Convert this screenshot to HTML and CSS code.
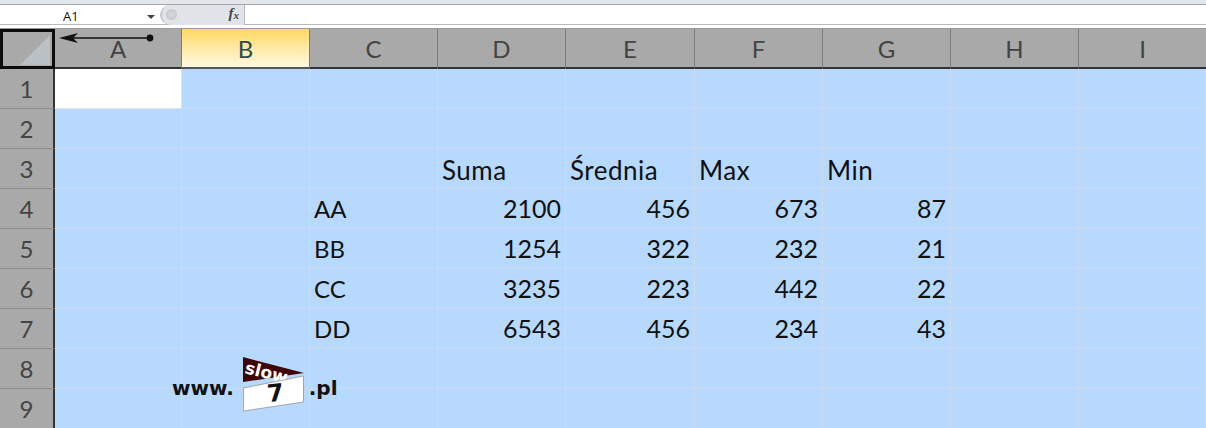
FILE: index.html
```html
<!DOCTYPE html>
<html lang="pl">
<head>
<meta charset="utf-8">
<title>Arkusz</title>
<link rel="stylesheet" href="styles.css">
</head>
<body>
<div class="app">
  <div class="formula-bar">
    <div class="name-box"><span class="name-text">A1</span><svg class="caret" width="8" height="4" viewBox="0 0 8 4"><path d="M0 0h8L4 4z" fill="#444"/></svg></div>
    <div class="fx-box"><span class="knob"></span><span class="fx">f<sub>x</sub></span></div>
    <div class="formula-input"></div>
  </div>
  <div class="sheet">
    <div class="corner"><svg width="30" height="30" viewBox="0 0 30 30"><path d="M30 0V30H0z" fill="#b9c0c6"/></svg></div>
    <div class="col">A</div><div class="col active">B</div><div class="col">C</div><div class="col">D</div><div class="col">E</div><div class="col">F</div><div class="col">G</div><div class="col">H</div><div class="col last">I</div>

    <div class="row-h">1</div><div class="c sel"></div><div class="c"></div><div class="c"></div><div class="c"></div><div class="c"></div><div class="c"></div><div class="c"></div><div class="c"></div><div class="c"></div>
    <div class="row-h">2</div><div class="c"></div><div class="c"></div><div class="c"></div><div class="c"></div><div class="c"></div><div class="c"></div><div class="c"></div><div class="c"></div><div class="c"></div>
    <div class="row-h">3</div><div class="c"></div><div class="c"></div><div class="c"></div><div class="c t">Suma</div><div class="c t">Średnia</div><div class="c t">Max</div><div class="c t">Min</div><div class="c"></div><div class="c"></div>
    <div class="row-h">4</div><div class="c"></div><div class="c"></div><div class="c">AA</div><div class="c n">2100</div><div class="c n">456</div><div class="c n">673</div><div class="c n">87</div><div class="c"></div><div class="c"></div>
    <div class="row-h">5</div><div class="c"></div><div class="c"></div><div class="c">BB</div><div class="c n">1254</div><div class="c n">322</div><div class="c n">232</div><div class="c n">21</div><div class="c"></div><div class="c"></div>
    <div class="row-h">6</div><div class="c"></div><div class="c"></div><div class="c">CC</div><div class="c n">3235</div><div class="c n">223</div><div class="c n">442</div><div class="c n">22</div><div class="c"></div><div class="c"></div>
    <div class="row-h">7</div><div class="c"></div><div class="c"></div><div class="c">DD</div><div class="c n">6543</div><div class="c n">456</div><div class="c n">234</div><div class="c n">43</div><div class="c"></div><div class="c"></div>
    <div class="row-h">8</div><div class="c"></div><div class="c"></div><div class="c"></div><div class="c"></div><div class="c"></div><div class="c"></div><div class="c"></div><div class="c"></div><div class="c"></div>
    <div class="row-h">9</div><div class="c"></div><div class="c"></div><div class="c"></div><div class="c"></div><div class="c"></div><div class="c"></div><div class="c"></div><div class="c"></div><div class="c"></div>

    <svg class="arrow" width="96" height="12" viewBox="0 0 96 12"><path d="M10 6H92" stroke="#111" stroke-width="1.6"/><path d="M0 6L19 1 14 6 19 11z" fill="#111"/><circle cx="91" cy="6" r="3.4" fill="#111"/></svg>

    <div class="logo">
      <span class="www">www.</span>
      <svg class="mark" width="62" height="55" viewBox="0 0 62 55">
        <path d="M0 0L61 16 0 25z" fill="#3d0505"/>
        <text class="slow" transform="translate(1 16) rotate(14)">slow</text>
        <path d="M0.5 31L60.5 19V45L0.5 54z" fill="#fff" stroke="#8a8a8a" stroke-width=".7"/>
        <text class="seven" transform="translate(25 45) rotate(-6)">7</text>
      </svg>
      <span class="www pl">.pl</span>
    </div>
  </div>
</div>
</body>
</html>
```
FILE: styles.css
```css
* { box-sizing: border-box; }
html, body { margin: 0; padding: 0; width: 1206px; height: 428px; overflow: hidden; background: #fff; }
.app { display: flex; flex-direction: column; height: 428px; font-family: Lato, "Open Sans", sans-serif; }

.formula-bar {
  height: 29px; display: flex; background: #fff;
  border-top: 4px solid #e4e7ea; border-bottom: 4px solid #fff; position: relative;
  box-shadow: inset 0 1px 0 #a3a6aa;
}
.formula-bar::after { content: ""; position: absolute; left: 0; right: 0; bottom: -4px; height: 1px; background: #9a9a9a; }
.formula-bar::before { content: ""; position: absolute; left: 0; right: 0; bottom: 0; height: 1px; background: #b5b8bc; }
.name-box { width: 160px; display: flex; align-items: center; position: relative; padding: 2px 0 0 63px; }
.name-text { font: 13px "Open Sans", sans-serif; color: #111; }
.caret { position: absolute; left: 147px; top: 11px; }
.fx-box {
  width: 85px; height: 20px; margin-top: 1px; background: #e0e3e7; display: flex; align-items: center; position: relative;
  border-radius: 11px 0 0 11px; border-right: 1px solid #b5b8bc; border-left: 2px solid #c3c6ca;
}
.knob { position: absolute; left: 4px; top: 4px; width: 11px; height: 11px; border-radius: 50%; background: radial-gradient(#d8dadd, #bfc2c6); }
.fx { position: absolute; right: 5px; top: 0; font: italic bold 15px "Liberation Serif", serif; color: #444; }
.fx sub { font-size: 11px; vertical-align: -1px; }
.formula-input { flex: 1; }

.sheet {
  flex: 1; position: relative; display: grid; background: #b7d9fe;
  grid-template-columns: 55px 127px 128px 128px 128px 129px 128px 128px 128px 127px;
  grid-template-rows: 40px repeat(9, 40px);
  overflow: hidden;
}
.corner {
  background: #a9a9a9; border: 3px solid #0c0c0c; display: flex; align-items: flex-end; justify-content: flex-end;
  padding: 0 2px 1px 0;
}
.col {
  background: #a9a9a9; color: #444; font-size: 24px; display: flex; align-items: flex-end; justify-content: center;
  border-right: 1px solid #7c7c7c; border-bottom: 2px solid #333; line-height: 36px;
}
.col.last { border-right: 0; }
.col.active { background: linear-gradient(#ffd864, #fff9e2); color: #2e4a50; border-bottom-color: #555; }
.row-h {
  background: #a9a9a9; color: #444; font-size: 24px; display: flex; align-items: center; justify-content: center;
  border-right: 2px solid #333; border-bottom: 1px solid #8c8c8c; line-height: 1;
}
.c {
  border-right: 1px solid #cfdbe8; border-bottom: 1px solid #cfdbe8; color: #111;
  font-size: 24px; line-height: 39px; padding: 0 4px; white-space: nowrap; overflow: visible;
}
.c.t { font-size: 26px; letter-spacing: .5px; line-height: 42px; }
.c.n { text-align: right; font-size: 25px; }
.c.sel { background: #fff; border-color: #dfe3e7; }

.arrow { position: absolute; left: 59px; top: 3px; }
.logo { position: absolute; left: 172px; top: 328px; display: flex; align-items: flex-start; font-family: "DejaVu Sans", sans-serif; }
.www { font-size: 20px; font-weight: 700; color: #111; line-height: 23px; margin-top: 20px; }
.pl { margin-left: 4px; }
.mark { display: block; margin-left: 9px; }
.slow { fill: #fff; font-size: 17px; font-weight: 700; font-family: "DejaVu Sans", sans-serif; }
.seven { fill: #111; font-size: 24px; font-weight: 700; font-family: "DejaVu Sans", sans-serif; }
```
